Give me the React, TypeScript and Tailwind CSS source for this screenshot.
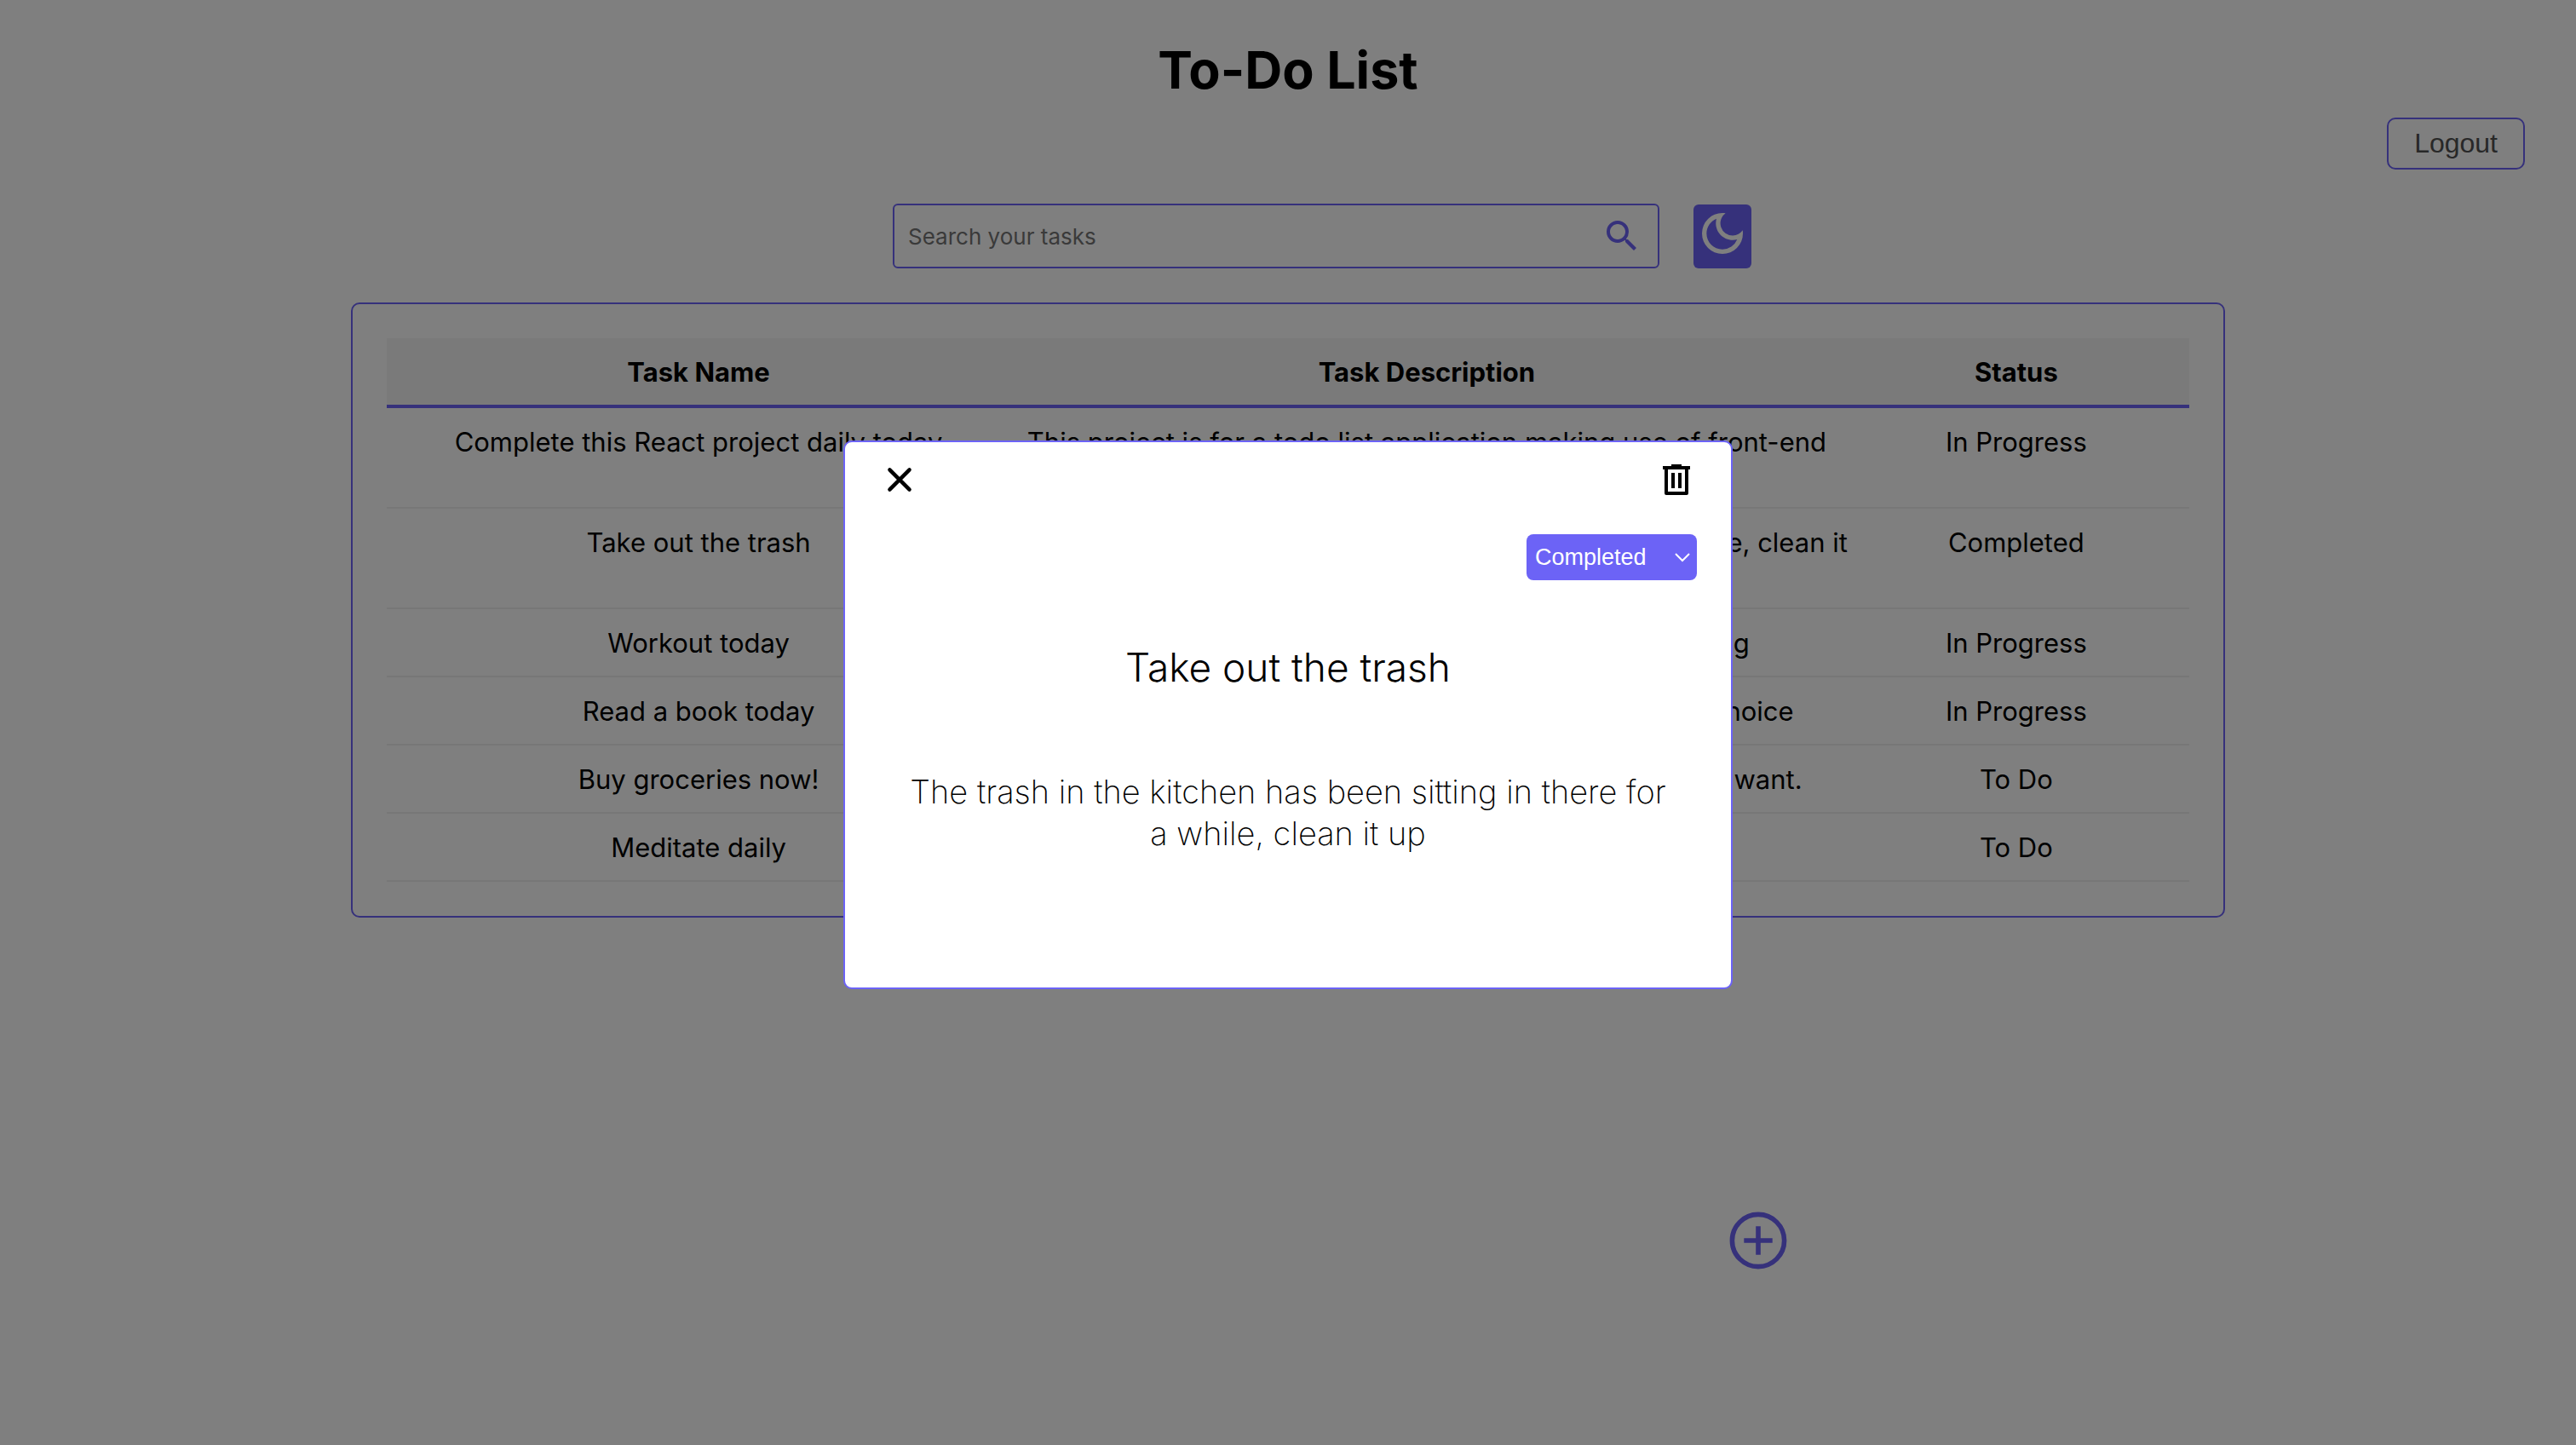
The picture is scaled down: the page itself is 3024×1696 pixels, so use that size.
import { useState } from "react";
import { MdOutlineDarkMode, MdSearch } from "react-icons/md";

const tasks = [
  {
    name: "Complete this React project daily today",
    description:
      "This project is for a todo list application making use of front-end technologies",
    status: "In Progress",
  },
  {
    name: "Take out the trash",
    description:
      "The trash in the kitchen has been sitting in there for a while, clean it up",
    status: "Completed",
  },
  {
    name: "Workout today",
    description: "Go to the gym and spend one full hour weight lifting",
    status: "In Progress",
  },
  {
    name: "Read a book today",
    description: "Read at least thirty pages from a good book of your choice",
    status: "In Progress",
  },
  {
    name: "Buy groceries now!",
    description: "Go to the market and get all of the fresh groceries you want.",
    status: "To Do",
  },
  {
    name: "Meditate daily",
    description: "Sit and meditate for ten minutes",
    status: "To Do",
  },
];

function CloseIcon() {
  return (
    <svg viewBox="0 0 24 24" className="size-12" aria-hidden="true">
      <path
        d="M6.2 6.2 17.8 17.8M17.8 6.2 6.2 17.8"
        fill="none"
        stroke="currentColor"
        strokeWidth="2.2"
        strokeLinecap="round"
      />
    </svg>
  );
}

function TrashIcon() {
  return (
    <svg viewBox="0 0 24 24" className="size-12" fill="currentColor" aria-hidden="true">
      <path
        fillRule="evenodd"
        d="M9 3h6v1h5v2h-1v14a1 1 0 0 1-1 1H6a1 1 0 0 1-1-1V6H4V4h5ZM7 6v13h10V6ZM9 8h2v9H9ZM13 8h2v9h-2Z"
      />
    </svg>
  );
}

function PlusCircleIcon() {
  return (
    <svg viewBox="0 0 80 80" className="size-20" fill="none" stroke="currentColor" aria-hidden="true">
      <circle cx="40" cy="40" r="30.6" strokeWidth="5.6" />
      <path d="M40 23.3v33.4M23.3 40h33.4" strokeWidth="5.6" />
    </svg>
  );
}

function TaskTable() {
  return (
    <section className="mx-auto mt-10 w-[2200px] max-w-[94%] rounded-[10px] border-2 border-[#6c63f6] p-10">
      <table className="w-full table-fixed border-separate border-spacing-0 text-center text-[31px] leading-[38px]">
        <thead>
          <tr className="bg-[#f4f4f4]">
            <th className="w-[34.6%] border-b-4 border-[#6c63f6] pt-[21px] pb-[19px] font-bold">Task Name</th>
            <th className="w-[46.2%] border-b-4 border-[#6c63f6] pt-[21px] pb-[19px] font-bold">
              Task Description
            </th>
            <th className="border-b-4 border-[#6c63f6] pt-[21px] pb-[19px] font-bold">Status</th>
          </tr>
        </thead>
        <tbody>
          {tasks.map((task) => (
            <tr key={task.name} className="align-top">
              <td className="border-b-2 border-[#eeeeee] pt-[21px] pb-[19px]">{task.name}</td>
              <td className="border-b-2 border-[#eeeeee] pt-[21px] pb-[19px]">
                <p className="-mx-3">{task.description}</p>
              </td>
              <td className="border-b-2 border-[#eeeeee] pt-[21px] pb-[19px]">{task.status}</td>
            </tr>
          ))}
        </tbody>
      </table>
    </section>
  );
}

function TaskDialog() {
  const [status, setStatus] = useState("Completed");
  return (
    <div className="fixed inset-0 flex items-center justify-center bg-black/50 pb-[18px]">
      <div
        role="dialog"
        aria-modal="true"
        aria-labelledby="task-title"
        className="flex min-h-[644px] w-[1044px] max-w-[94%] flex-col rounded-[10px] border-2 border-[#6c63f6] bg-white px-10 pt-5"
      >
        <div className="flex justify-between">
          <button type="button" aria-label="Close">
            <CloseIcon />
          </button>
          <button type="button" aria-label="Delete task">
            <TrashIcon />
          </button>
        </div>
        <div className="relative mt-10 flex self-end text-white">
          <select
            aria-label="Status"
            value={status}
            onChange={(e) => setStatus(e.target.value)}
            className="h-[54px] w-[200px] appearance-none rounded-lg bg-[#6c63f6] pl-[10px] font-['Liberation_Sans',sans-serif] text-[27px]"
          >
            <option>To Do</option>
            <option>In Progress</option>
            <option>Completed</option>
          </select>
          <svg
            viewBox="0 0 20 12"
            className="pointer-events-none absolute top-[21px] right-[7px] h-3 w-5"
            fill="none"
            stroke="currentColor"
            strokeWidth="2"
            aria-hidden="true"
          >
            <path d="m2 2 8 8 8-8" />
          </svg>
        </div>
        <h2 id="task-title" className="mt-[72px] text-center text-[46px] leading-[60px] font-light">
          Take out the trash
        </h2>
        <p className="mt-[92px] px-7 text-center text-[38px] leading-[49px] font-extralight">
          The trash in the kitchen has been sitting in there for a while, clean it up
        </p>
      </div>
    </div>
  );
}

export default function App() {
  return (
    <div className="min-h-screen bg-white font-['Inter',sans-serif] text-black">
      <header className="flex flex-col pt-11">
        <h1 className="text-center text-[61px] leading-[76px] font-bold">To-Do List</h1>
        <button
          type="button"
          className="mt-[18px] mr-[60px] h-[61px] self-end rounded-[10px] border-2 border-[#6c63f6] px-[30px] pb-[2px] font-['Liberation_Sans',sans-serif] text-[32px] text-[#505050]"
        >
          Logout
        </button>
      </header>
      <main>
        <div className="mt-10 flex items-center justify-center gap-10 pl-20">
          <label className="flex h-[76px] w-[900px] items-center rounded-md border-2 border-[#6c63f6] pr-[18px] pl-4 text-[#6c63f6]">
            <input
              type="text"
              aria-label="Search your tasks"
              placeholder="Search your tasks"
              className="min-w-0 flex-1 text-[26px] text-black outline-none placeholder:text-[#757575]"
            />
            <MdSearch className="size-12" />
          </label>
          <button
            type="button"
            aria-label="Toggle dark mode"
            className="h-[75px] rounded-md bg-[#6c63f6] px-[2px] pb-[7px] text-white"
          >
            <MdOutlineDarkMode className="size-16" />
          </button>
        </div>
        <TaskTable />
        <div className="mx-auto mt-[339px] flex w-[1184px] max-w-full justify-end">
          <button type="button" aria-label="Add task" className="text-[#6c63f6]">
            <PlusCircleIcon />
          </button>
        </div>
      </main>
      <TaskDialog />
    </div>
  );
}
